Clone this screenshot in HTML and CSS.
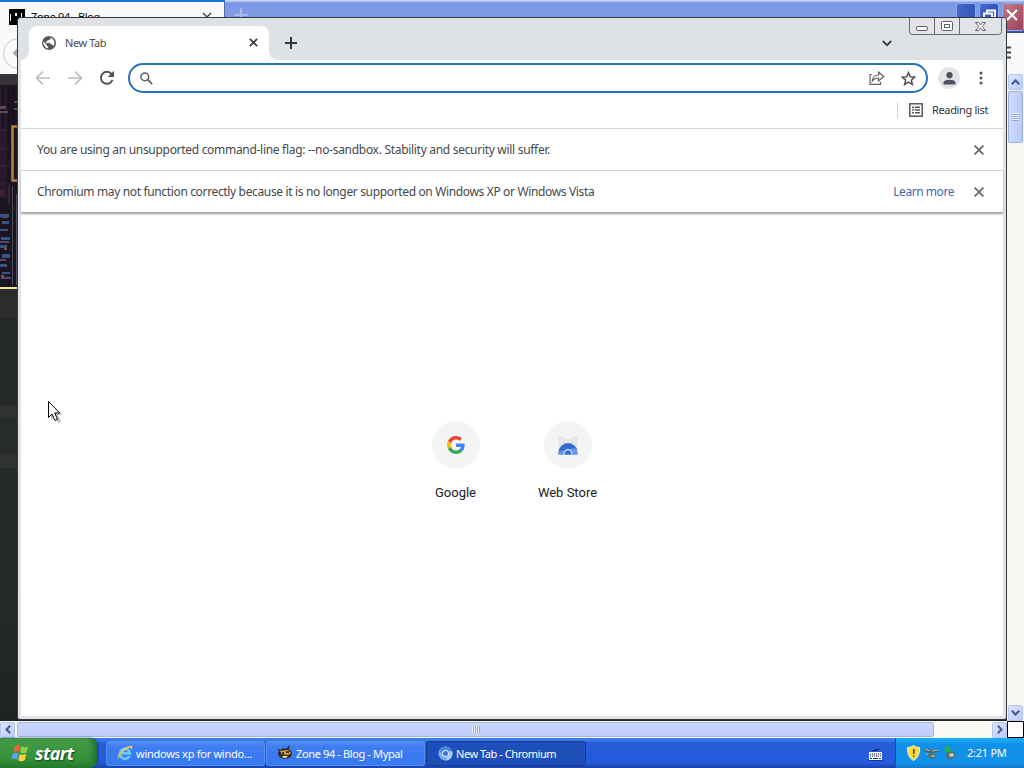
FILE: index.html
```
<!DOCTYPE html>
<html lang="en">
<head>
<meta charset="utf-8">
<title>New Tab - Chromium</title>
<link rel="stylesheet" href="styles.css">
</head>
<body>
<div class="desktop">

  <!-- browser in the background -->
  <div class="mypal">
    <div class="mypal-tabs">
      <div class="mypal-tab">
        <svg class="zone-icon" width="16" height="16" viewBox="0 0 16 16"><path d="M0 0h16v16H0z" fill="#000"/><path d="M1 5h1v7H1zM6 4h2v3H6zM12 4h1v4h-1z" fill="#fff"/></svg>
        <span class="mypal-title">Zone 94 - Blog</span>
        <svg width="10" height="10" viewBox="0 0 10 10"><path d="M1 1l8 8M9 1L1 9" stroke="#444" stroke-width="1.4"/></svg>
      </div>
      <svg class="mypal-plus" width="14" height="14" viewBox="0 0 14 14"><path d="M7 0v14M0 7h14" stroke="#b4c2ee" stroke-width="1.6"/></svg>
      <div class="xp-buttons">
        <span class="xp-btn"></span>
        <span class="xp-btn"><svg width="19" height="26" viewBox="0 0 19 26"><path d="M7 13V10.500h8v7h-3M4 13.500h8v8H4z" fill="none" stroke="#fff" stroke-width="1.800"/></svg></span>
        <span class="xp-btn xp-close"><svg width="22" height="26" viewBox="0 0 22 26"><path d="M4 10l10 10M14 10L4 20" stroke="#fff" stroke-width="2.200"/></svg></span>
      </div>
    </div>
    <div class="mypal-bar">
      <span class="mypal-back"><svg width="12" height="14" viewBox="0 0 12 14"><path d="M8 2L3 7l5 5M3 7h9" fill="none" stroke="#aaa" stroke-width="2"/></svg></span>
      <svg class="mypal-menu" width="14" height="13" viewBox="0 0 14 13"><path d="M0 1.500h10M0 6.500h10M0 11.500h10" stroke="#444" stroke-width="2"/></svg>
    </div>
    <div class="mypal-body">
      <div class="mypal-page">
        <svg class="city" width="18" height="213" viewBox="0 0 18 213">
          <path d="M0 0h18v213H0z" fill="#1d1421"/>
          <path d="M0 0h18v11H0z" fill="#363438"/>
          <path d="M0 14h7v110H0z" fill="#281a2b"/>
          <path d="M2 15h2v40H2zM8 13h1v47H8zM13 13h2v34h-2z" fill="#17111d"/>
          <path d="M0 32h6v3H0zM0 37h8v2H0zM14 27h3v2h-3zM14 34h3v2h-3z" fill="#5a4852"/>
          <path d="M0 56h10M0 75h9M0 92h10M0 110h11" stroke="#3a2437"/>
          <path d="M17 52.500h-4.500v54H17" fill="none" stroke="#b98240" stroke-width="2.500"/>
          <path d="M0 116h4v6H0zM8 112h2v18H8z" fill="#40203a"/>
          <path d="M0 140h9v3H0zM2 147h7v3H2zM0 155h8v2H0zM1 163h9v3H1zM0 171h7v3H0zM2 180h8v4H2zM0 190h7v3H0zM2 198h8v2H2z" fill="#355681"/>
          <path d="M1 143h7M0 168h9M0 186h6M1 204h10" stroke="#54476b" stroke-width="2"/>
          <path d="M12 112h1v99h-1zM16 120h1v91h-1z" fill="#48505e"/>
          <path d="M4 174h3v2H4zM1 201h3v2H1z" fill="#8d4d4c"/>
        </svg>
        <div class="page-rows"></div>
      </div>
      <div class="scroll-v">
        <span class="scroll-btn"><svg width="9" height="6" viewBox="0 0 9 6"><path d="M.8 5.200L4.500 1.500l3.700 3.700" fill="none" stroke="#42598d" stroke-width="2"/></svg></span>
        <span class="thumb-v"><i class="grip"></i></span>
        <span class="scroll-btn last"><svg width="9" height="6" viewBox="0 0 9 6"><path d="M.8.800l3.700 3.700L8.200.800" fill="none" stroke="#42598d" stroke-width="2"/></svg></span>
      </div>
    </div>
    <div class="scroll-h">
      <span class="scroll-btn"><svg width="6" height="9" viewBox="0 0 6 9"><path d="M5.200.800L1.500 4.500l3.700 3.700" fill="none" stroke="#42598d" stroke-width="2"/></svg></span>
      <span class="thumb-h"><i class="grip grip-h"></i></span>
      <span class="scroll-btn last"><svg width="6" height="9" viewBox="0 0 6 9"><path d="M.8.800l3.700 3.700L.8 8.200" fill="none" stroke="#42598d" stroke-width="2"/></svg></span>
      <span class="corner"></span>
    </div>
  </div>

  <!-- chromium window -->
  <div class="chromium">
    <div class="tabstrip">
      <div class="tab">
        <svg width="14" height="14" viewBox="0 0 14 14"><circle cx="7" cy="7" r="7" fill="#54585c"/><path d="M1.500 5.500L5 9v1l1.200 1v1.500A5.600 5.600 0 0 1 1.500 5.500zM8.500 1.600v1.600L7 4H5.500v1.600H4V7h4l1 1.500h1.500l.7 1.800A5.600 5.600 0 0 0 8.500 1.600z" fill="#fff"/></svg>
        <span class="tab-title">New Tab</span>
        <svg width="9" height="9" viewBox="0 0 9 9"><path d="M.8.800l7.400 7.400M8.200.800L.8 8.200" stroke="#3c4043" stroke-width="1.700"/></svg>
      </div>
      <svg class="new-tab" width="12" height="12" viewBox="0 0 12 12"><path d="M6 0v12M0 6h12" stroke="#35383b" stroke-width="2"/></svg>
      <svg class="tab-search" width="10" height="7" viewBox="0 0 10 7"><path d="M.8 1L5 5.200 9.200 1" fill="none" stroke="#3c4043" stroke-width="1.900"/></svg>
      <svg class="win-buttons" width="93" height="18" viewBox="0 0 93 18">
        <path d="M.5 0v13.500q0 3 3 3h86q3 0 3-3V0M25.500 0v16.500M50.500 0v16.500" fill="#e2e4e7" stroke="#666b70"/>
        <g fill="#fff" stroke="#5d6267"><rect x="7.500" y="8.500" width="11" height="4" rx="1.500"/><rect x="32.500" y="3.500" width="11" height="9" rx="1"/><rect x="35.500" y="6.500" width="5" height="3"/><path d="M66.500 4.500h3l2 2.500 2-2.500h3l-3.300 4 3.300 4h-3l-2-2.500-2 2.500h-3l3.300-4z"/></g>
      </svg>
    </div>
    <div class="toolbar">
      <svg class="nav" width="16" height="16" viewBox="0 0 16 16"><path d="M15 8H2M8 1.500L1.500 8 8 14.500" fill="none" stroke="#b9bbbe" stroke-width="1.700"/></svg>
      <svg class="nav" width="16" height="16" viewBox="0 0 16 16"><path d="M1 8h13M8 1.500L14.500 8 8 14.500" fill="none" stroke="#b9bbbe" stroke-width="1.700"/></svg>
      <svg class="nav" width="16" height="16" viewBox="0 0 16 16"><path d="M13.500 10a6 6 0 1 1-.9-6" fill="none" stroke="#505458" stroke-width="2"/><path d="M15 .8V7H8.800z" fill="#505458"/></svg>
      <div class="omnibox">
        <svg width="13" height="13" viewBox="0 0 13 13"><circle cx="4.800" cy="4.800" r="3.900" fill="none" stroke="#5a5e62" stroke-width="1.500"/><path d="M7.700 7.700l4.500 4.500" stroke="#5a5e62" stroke-width="1.700"/></svg>
        <svg class="share" width="16" height="14" viewBox="0 0 16 14"><path d="M3 3.500H1v9.800h10.500v-2.500M9.500 1v3C5.500 4 3.700 6.500 3.300 10c1.700-2.300 3.500-3 6.200-3v3l5.300-4.500z" fill="none" stroke="#5f6368" stroke-width="1.200"/></svg>
        <svg class="star" width="15" height="15" viewBox="0 0 15 15"><path d="M7.500 1.500l1.800 4.200 4.500.4-3.400 3 1 4.400-3.900-2.300-3.900 2.300 1-4.400-3.400-3 4.500-.4z" fill="none" stroke="#505458" stroke-width="1.500"/></svg>
      </div>
      <span class="avatar"><svg width="13" height="13" viewBox="0 0 13 13"><circle cx="6.500" cy="3.200" r="3.100" fill="#4b555f"/><path d="M.5 12.500V10.500C.5 8.500 4 7.700 6.500 7.700s6 .8 6 2.800v2z" fill="#4b555f"/></svg></span>
      <svg class="dots" width="4" height="14" viewBox="0 0 4 14"><g fill="#505458"><circle cx="2" cy="2" r="1.500"/><circle cx="2" cy="7" r="1.500"/><circle cx="2" cy="12" r="1.500"/></g></svg>
    </div>
    <div class="bookmarks">
      <div class="reading">
        <svg width="14" height="14" viewBox="0 0 14 14"><rect x=".8" y=".8" width="12.400" height="12.400" fill="none" stroke="#54585c" stroke-width="1.500"/><path d="M3 4.200h2M6 4.200h5M3 7h2M6 7h5M3 9.800h2M6 9.800h5" stroke="#54585c" stroke-width="1.400"/></svg>
        <span class="reading-text">Reading list</span>
      </div>
    </div>
    <div class="infobar">
      <span class="info-one">You are using an unsupported command-line flag: --no-sandbox. Stability and security will suffer.</span>
      <svg class="info-x" width="10" height="10" viewBox="0 0 10 10"><path d="M.6.600l8.800 8.800M9.400.600L.6 9.400" stroke="#606468" stroke-width="1.700"/></svg>
    </div>
    <div class="infobar infobar-last">
      <span class="info-two">Chromium may not function correctly because it is no longer supported on Windows XP or Windows Vista</span>
      <span class="learn">Learn more</span>
      <svg class="info-x" width="10" height="10" viewBox="0 0 10 10"><path d="M.6.600l8.800 8.800M9.400.600L.6 9.400" stroke="#606468" stroke-width="1.700"/></svg>
    </div>
    <div class="ntp">
      <div class="tile">
        <span class="tile-icon"><svg width="18" height="18" viewBox="0 0 48 48"><path fill="#EA4335" d="M24 9.500c3.500 0 6.700 1.200 9.200 3.600l6.900-6.900C35.900 2.400 30.500 0 24 0 14.600 0 6.500 5.400 2.600 13.200l8 6.200C12.400 13.700 17.700 9.500 24 9.500z"/><path fill="#4285F4" d="M47 24.600c0-1.600-.2-3.100-.4-4.600H24v9h12.900c-.6 3-2.300 5.500-4.800 7.200l7.700 6C44.400 38 47 31.900 47 24.600z"/><path fill="#FBBC05" d="M10.500 28.600a14.500 14.500 0 0 1 0-9.200l-8-6.200a24 24 0 0 0 0 21.600z"/><path fill="#34A853" d="M24 48c6.500 0 11.900-2.100 15.900-5.800l-7.700-6c-2.200 1.400-4.900 2.300-8.200 2.300-6.300 0-11.600-4.200-13.500-9.900l-8 6.200C6.500 42.600 14.600 48 24 48z"/></svg></span>
        <span class="tile-text">Google</span>
      </div>
      <div class="tile">
        <span class="tile-icon"><svg width="20" height="20" viewBox="0 0 20 20"><path d="M0 1h4l2 3h8l2-3h4l-1 14H1z" fill="#e6e7eb"/><path d="M.5 19.500v-2a9.500 9.500 0 0 1 19 0v2z" fill="#3368cc"/><path d="M.5 19.500V17l5-2 2 4.500zM13 13.500h5.500l1 6h-6z" fill="#6b98ea"/><path d="M5.500 19.500v-1.300a4.500 4.500 0 0 1 9 0v1.300z" fill="#b2cdfb"/><path d="M7 19.500v-1a3 3 0 0 1 6 0v1z" fill="#326bd5"/></svg></span>
        <span class="tile-text store">Web Store</span>
      </div>
    </div>
  </div>

  <div class="taskbar">
    <div class="start">
      <svg width="19" height="18" viewBox="0 0 19 18"><path d="M4 2q3-2 5.500-.2L8 8Q5.500 6.500 2.500 8z" fill="#ef6335"/><path d="M10.500 2.300Q13.500 4 17 2.200L15.500 8.500Q12 10 9 8.300z" fill="#8fce4a"/><path d="M2 9.500Q5 8 7.500 9.500L6 15.700Q3.500 14 .5 15.500z" fill="#639dfa"/><path d="M8.700 9.900q3 1.800 6.500.1L13.700 16.300q-3.500 1.700-6.500 0z" fill="#fbd044"/></svg>
      <span class="start-text">start</span>
    </div>
    <div class="task">
      <svg width="16" height="16" viewBox="0 0 16 16"><path d="M12.500 11A5 5 0 1 1 13 8.300H5" fill="none" stroke="#68c8fa" stroke-width="2.800"/><path d="M1 15C-2 11 10-1 15 1c1 1 0 3-1 4 1-4-4-2-8 2s-5 6-5 8z" fill="#f6c64a"/></svg>
      <span class="task-ie">windows xp for windo...</span>
    </div>
    <div class="task">
      <svg width="16" height="16" viewBox="0 0 16 16"><path d="M0 4l4 1 2-2 3 1 4-4-1 4 3 3-1 5-5 2-5-1-3-3 2-2z" fill="#352b20"/><path d="M3 6l8-1 3 3-3 2-7-1z" fill="#d7a34d"/><path d="M5 11h6l-2 2-3-.5z" fill="#f5e3b7"/><path d="M1 8h3M5 8h2M9 7h3" stroke="#17120d" stroke-width="1.500"/></svg>
      <span class="task-mypal">Zone 94 - Blog - Mypal</span>
    </div>
    <div class="task active">
      <svg width="15" height="15" viewBox="0 0 15 15"><circle cx="7.500" cy="7.500" r="7" fill="#79aef3"/><path d="M1.500 4A7 7 0 0 1 14 5H7.500L4.500 9z" fill="#4b86dc"/><path d="M14 5a7 7 0 0 1-6.500 9.500L11 8z" fill="#a8cdfb"/><circle cx="7.500" cy="7.500" r="3.500" fill="#d5e6ff"/><circle cx="7.500" cy="7.500" r="2.500" fill="#3976d3"/></svg>
      <span class="task-chromium">New Tab - Chromium</span>
    </div>
    <svg class="keyboard" width="13" height="13" viewBox="0 0 13 13"><path d="M4 3.500V2.500h3V1.500h3" fill="none" stroke="#10214f"/><path d="M0 4h13v8H0z" fill="#fff"/><path d="M0 12.500h13M1 6h11M1 8h11" stroke="#15244f" stroke-dasharray="1.200 .8"/><path d="M1 10.500h2M4 10.500h5M10 10.500h2" stroke="#15244f"/></svg>
    <div class="tray">
      <svg width="13" height="16" viewBox="0 0 13 16"><path d="M6.500.500Q9 2.500 12.500 2.500 13 12 6.500 15.500 0 12 .5 2.500 4 2.500 6.500.500z" fill="#ffd83b" stroke="#f3edce"/><path d="M6 4h1.500v5H6zM6 10.500h1.500V12H6z" fill="#55400a"/></svg>
      <svg width="16" height="15" viewBox="0 0 16 15"><path d="M1 3l7 2 7-1v3l-7 1-6-1z" fill="#52615f"/><path d="M2 4l5 2M9 6l6-1M3 9l7 2" stroke="#a9c7b3"/><path d="M4 10l4-2 5 2v3l-5 1z" fill="#576a60"/><path d="M8 11h4" stroke="#d8e5d0"/></svg>
      <svg width="15" height="16" viewBox="0 0 15 16"><path d="M1 5l6-5v3l3 4-4 2-2-3z" fill="#24b548"/><path d="M5 7l7-1 2 5-6 4-4-3z" fill="#56706c"/><path d="M7 9l4-1 1 3-4 1z" fill="#c0d7cc"/></svg>
      <span class="clock">2:21 PM</span>
    </div>
  </div>

  <svg class="cursor" width="17" height="24" viewBox="0 0 17 24"><path d="M1 1v16l4-4 3 7 3-1.500L8 12h5z" transform="translate(2 2)" fill="#777" opacity=".45"/><path d="M.5.500v16l3.500-3.500 3 6.500 2.500-1.200-2.800-6.300h5z" fill="#fff" stroke="#000"/></svg>
</div>
</body>
</html>
```
FILE: styles.css
```
* { box-sizing: border-box; }
body { margin: 0; overflow: hidden; font-family: "Noto Sans", "Open Sans", sans-serif; font-size: 11px; }
svg { display: block; flex: none; }
span { white-space: nowrap; }

.desktop { position: relative; width: 1024px; height: 768px; overflow: hidden; display: flex; flex-direction: column; }

/* background browser */
.mypal { height: 738px; display: flex; flex-direction: column; background: #f9f9f9; }
.mypal-tabs { height: 33px; flex: none; display: flex; background: linear-gradient(#d6e3ff 0, #7797e8 3px, #7f9be5 12px, #8098e0 24px, #3446a8); }
.mypal-tab { width: 225px; height: 33px; background: #f8f8f8; border-top: 2px solid #1675e0; border-right: 1px solid #5468aa; display: flex; padding: 7px 12px 0 9px; }
.mypal-tab > svg:last-child { margin: 3px 0 0 auto; }
.mypal-title { margin-left: 6px; font-size: 11px; line-height: 15px; letter-spacing: -.36px; color: #111; }
.mypal-plus { margin: 8px 0 0 9px; }
.xp-buttons { margin-left: auto; display: flex; gap: 3px; padding-top: 3px; }
.xp-btn { width: 20px; height: 28px; border: 1px solid #93a9e7; border-radius: 3px; background: linear-gradient(90deg, #4267cc, #3254b9); overflow: hidden; }
.xp-btn svg { margin-top: -4px; }
.xp-close { width: 22px; background: linear-gradient(135deg, #c57986, #9c4259); }
.mypal-bar { height: 41px; flex: none; display: flex; justify-content: space-between; background: #fafafa; }
.mypal-back { width: 31px; height: 31px; margin: 5px 0 0 3px; border: 1px solid #ccc; border-radius: 50%; padding: 7px; }
.mypal-menu { margin: 13px 9px 0 0; }
.mypal-body { height: 647px; flex: none; display: flex; justify-content: space-between; }
.mypal-page { width: 1007px; background: #242728; }
.page-rows { height: 434px; border-top: 2px solid #eee69c; background: linear-gradient(#2d2d2e 0 29px, #26292a 29px 116px, #303132 116px 129px, #272b2c 129px 166px, #303132 166px 179px, #262a2a 179px 300px, #202323); }
.scroll-v { width: 17px; background: #f8f8f2; display: flex; flex-direction: column; align-items: center; }
.scroll-btn { width: 15px; height: 16px; flex: none; display: flex; align-items: center; justify-content: center; border: 1px solid #b4c6f3; border-radius: 2px; background: linear-gradient(135deg, #dce6ff, #b9cbf8); }
.scroll-v .last { margin-top: auto; }
.thumb-v { width: 15px; height: 52px; margin-top: 1px; display: flex; align-items: center; justify-content: center; border: 1px solid #9daedf; border-radius: 2px; background: linear-gradient(90deg, #cfdbff, #b9c9f8); }
.grip { width: 7px; height: 8px; background: repeating-linear-gradient(#eef3ff 0 1px, #8fa7df 1px 2px); }
.grip-h { width: 8px; height: 7px; background: repeating-linear-gradient(90deg, #eef3ff 0 1px, #8fa7df 1px 2px); }
.scroll-h { height: 17px; flex: none; display: flex; align-items: center; background: #f8f8f5; border-top: 1px solid #fff; padding-bottom: 1px; }
.thumb-h { width: 917px; height: 15px; margin-left: 2px; display: flex; align-items: center; justify-content: center; border: 1px solid #a4b4de; border-radius: 2px; background: linear-gradient(#cad6ff, #bfcdf9); }
.scroll-h .last { margin-left: auto; }
.corner { width: 17px; height: 17px; border: 1px solid #000; background: #fff; }

/* front window */
.chromium { position: absolute; left: 17px; top: 17px; width: 990px; height: 703px; display: flex; flex-direction: column; padding: 0 3px 3px; border: 1px solid #34393d; border-radius: 4px 4px 3px 3px; background: #e1e3e6; overflow: hidden; }
.tabstrip { height: 42px; flex: none; display: flex; background: #dee1e6; margin: 0 -3px; padding-left: 11px; }
.tab { position: relative; width: 240px; height: 34px; margin-top: 8px; border-radius: 8px 8px 0 0; background: #fff; display: flex; align-items: center; padding: 0 11px 1px 13px; }
.tab::before, .tab::after { content: ""; position: absolute; bottom: 0; width: 8px; height: 8px; }
.tab::before { left: -8px; background: radial-gradient(circle at 0 0, #dee1e6 7.5px, #fff 8px); }
.tab::after { right: -8px; background: radial-gradient(circle at 100% 0, #dee1e6 7.5px, #fff 8px); }
.tab svg:last-child { margin-left: auto; }
.tab-title { margin-left: 9px; color: #4a4d50; font-size: 11px; letter-spacing: -.4px; }
.new-tab { margin: 19px 0 0 16px; }
.tab-search { margin: 22px 0 0 auto; }
.win-buttons { margin: 0 4px 0 17px; }
.toolbar { height: 36px; flex: none; display: flex; align-items: center; background: #fff; padding-left: 14px; }
.nav { margin-right: 16px; }
.omnibox { width: 800px; height: 30px; margin-left: -3px; border: 2px solid #2670bd; border-radius: 15px; display: flex; align-items: center; padding: 0 10px; }
.share { margin-left: auto; }
.star { margin-left: 16px; }
.avatar { width: 22px; height: 22px; margin-left: 10px; border-radius: 50%; background: #e1e4e8; display: flex; align-items: center; justify-content: center; }
.dots { margin-left: 19px; }
.bookmarks { height: 33px; flex: none; display: flex; justify-content: flex-end; background: #fff; border-bottom: 1px solid #d5d8da; padding: 6px 15px 0 0; }
.reading { width: 91px; height: 16px; display: flex; align-items: center; border-left: 1px solid #ccd0d3; padding-left: 11px; }
.reading-text { margin-left: 9px; line-height: 16px; margin-top: -1px; font-size: 11px; letter-spacing: -.34px; color: #303336; }
.infobar { height: 42px; flex: none; display: flex; align-items: center; padding: 0 19px 0 16px; background: #fff; border-bottom: 1px solid #d5d8da; font-size: 12px; color: #45484b; }
.info-one { letter-spacing: -.3px; }
.info-two { letter-spacing: -.35px; }
.info-x { margin-left: auto; }
.infobar-last { position: relative; border-bottom: 1px solid #aaa; box-shadow: 0 1px 2px #999; }
.learn { margin-left: auto; color: #4169b5; letter-spacing: -.45px; }
.learn + .info-x { margin-left: 20px; }
.ntp { flex: 1; display: flex; justify-content: center; background: #fff; padding: 208px 1px 0 0; }
.tile { width: 112px; display: flex; flex-direction: column; align-items: center; }
.tile-icon { width: 48px; height: 48px; border-radius: 50%; background: #f3f5f5; display: flex; align-items: center; justify-content: center; }
.tile-text { margin-top: 16px; font: 13px/15px Roboto, sans-serif; color: #202124; }

/* taskbar */
.taskbar { height: 30px; display: flex; background: linear-gradient(#3672df 0, #3b80ef 2px, #285cd9 5px, #245bdb 25px, #1941a5); color: #fff; }
.start { width: 97px; height: 30px; display: flex; align-items: center; padding-left: 11px; border-radius: 0 8px 8px 0; background: linear-gradient(#55a657 0, #429b44 4px, #349139 20px, #267d2c); box-shadow: inset -4px 0 5px #257332, 1px 0 2px #153f94; }
.start-text { margin-left: 5px; font: italic bold 18px/22px "Open Sans", sans-serif; letter-spacing: -.6px; text-shadow: 1px 1px 2px #163f17; }
.task { width: 159px; height: 25px; margin: 3px 1px 0 0; border: 1px solid #528ff1; border-radius: 3px; background: linear-gradient(#528df5 0, #3d7cf1 5px, #3878ef); display: flex; align-items: center; padding: 0 0 1px 10px; }
.start + .task { margin-left: 9px; }
.task span { margin-left: 3px; font-size: 11px; letter-spacing: -.37px; }
.task .task-ie { letter-spacing: -.27px; }
.task .task-chromium { letter-spacing: -.45px; }
.active { width: 160px; border-color: #153e92; background: #1e4fb9; padding: 0 0 0 11px; }
.keyboard { margin: 10px 13px 0 auto; }
.tray { width: 129px; display: flex; align-items: center; padding: 0 0 1px 11px; gap: 3px; border-left: 1px solid #1353ae; background: linear-gradient(#1ca9ee 0, #18a5f3 3px, #1190e9 6px, #1191e9 25px, #1675c4); }
.clock { margin-left: 7px; font-size: 11px; letter-spacing: -.25px; }
.cursor { position: absolute; left: 48px; top: 401px; }
```
